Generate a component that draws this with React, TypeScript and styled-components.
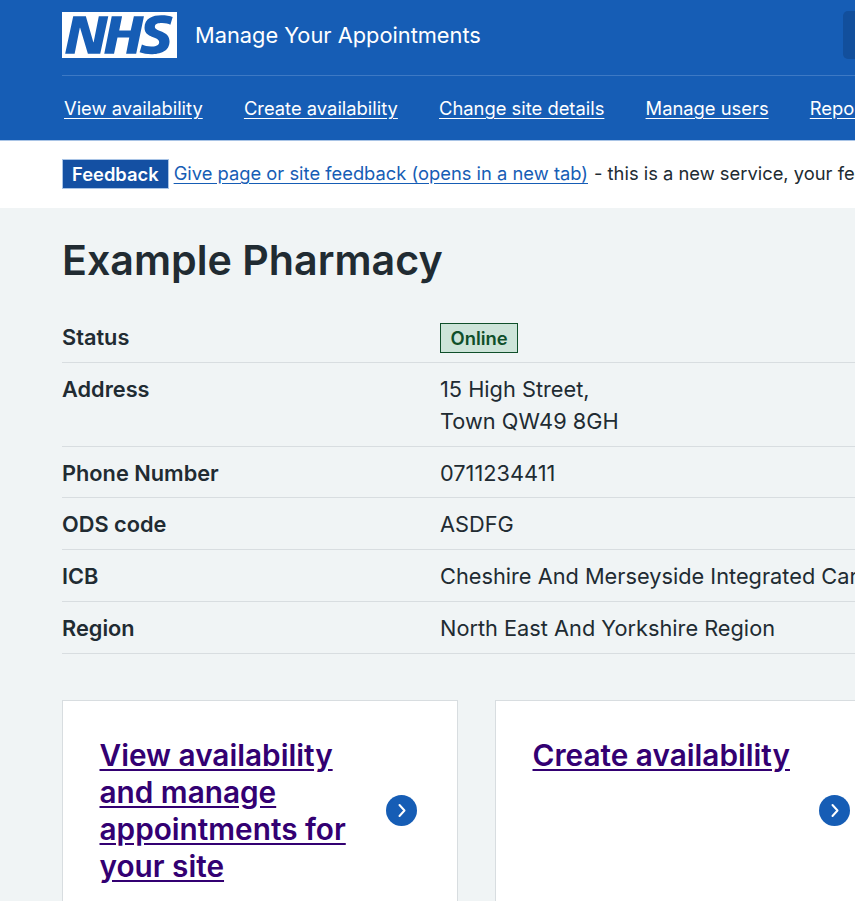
import styled, { createGlobalStyle } from "styled-components"

const Global = createGlobalStyle`
    html, body {
        margin: 0;
        height: 901px;
        overflow: hidden;
        background: #f0f4f5;
        font-family: "Inter", "Liberation Sans", sans-serif;
        color: #212b32;
    }
`

const Header = styled.header`
    background: #165db5;
    border-bottom: 1px solid #a9c4e6;
    box-sizing: border-box;
    height: 141px;
    padding: 12px 0 0 62px;
    width: 1300px;
`

const TopRow = styled.div`
    display: flex;
    align-items: flex-start;
    height: 63px;
    border-bottom: 1px solid #3d79c4;
`

const Logo = styled.svg`
    display: block;
    width: 115px;
    height: 46px;
    flex: none;
`

const ServiceName = styled.span`
    color: #fff;
    font-size: 21.8px;
    line-height: 46px;
    margin-left: 18px;
    width: 648px;
`

const HeaderButton = styled.div`
    width: 100px;
    height: 48px;
    margin-top: -1px;
    border-radius: 5px;
    background: #124f9c;
`

const Nav = styled.nav`
    display: flex;
    gap: 41.2px;
    padding: 19px 0 0 2px;
`

const NavLink = styled.a`
    color: #fff;
    font-size: 18.38px;
    line-height: 26px;
    text-decoration: underline;
    text-underline-offset: 3px;
    white-space: nowrap;
`

const FeedbackBand = styled.div`
    background: #fff;
    box-sizing: border-box;
    height: 67px;
    padding: 18px 0 0 62px;
    width: 1300px;
    display: flex;
    align-items: flex-start;
    font-size: 18.35px;
    line-height: 29px;
    white-space: nowrap;
`

const FeedbackTag = styled.strong`
    background: #1450a3;
    border: 1px solid #a9c4e6;
    box-sizing: border-box;
    color: #fff;
    font-weight: 600;
    height: 30px;
    line-height: 28px;
    padding: 0 9px;
    margin-right: 5px;
`

const FeedbackLink = styled.a`
    color: #165db5;
    text-decoration: underline;
    text-underline-offset: 3px;
    margin-right: 6px;
`

const Main = styled.main`
    padding: 25px 0 0 62px;
    width: 1300px;
`

const Title = styled.h1`
    font-size: 41.2px;
    line-height: 54px;
    font-weight: 600;
    margin: 0 0 24.4px;
`

const Summary = styled.dl`
    margin: 0 0 46px;
    width: 1100px;
`

const Row = styled.div`
    display: grid;
    grid-template-columns: 378px 1fr;
    border-bottom: 1px solid #d8dde0;
    padding: 10px 0 8.7px;
    font-size: 21.75px;
    line-height: 32px;
`

const Key = styled.dt`
    font-weight: 600;
`

const Value = styled.dd`
    margin: 0;
    white-space: nowrap;
`

const OnlineTag = styled.strong`
    display: inline-block;
    background: #cde4d9;
    border: 1px solid #0f4f2a;
    color: #0f4f2a;
    font-size: 18.4px;
    font-weight: 600;
    line-height: 28px;
    padding: 0 9.5px;
`

const Cards = styled.div`
    display: flex;
    gap: 37px;
    align-items: stretch;
`

const Card = styled.div`
    display: flex;
    align-items: center;
    gap: 20px;
    box-sizing: border-box;
    width: 396px;
    min-height: 220px;
    padding: 36px 40px 35px 36.5px;
    background: #fff;
    border: 1px solid #d8dde0;
`

const CardTitle = styled.a`
    flex: 1;
    align-self: flex-start;
    color: #330072;
    font-size: 29.75px;
    font-weight: 600;
    line-height: 37px;
    text-decoration: underline;
    text-underline-offset: 3px;
`

const Chevron = styled.svg`
    display: block;
    width: 31px;
    height: 31px;
    flex: none;
`

const CardChevron = () => (
    <Chevron viewBox="0 0 31 31">
        <circle cx="15.5" cy="15.5" r="15.5" fill="#165db5" />
        <path d="M13.5 10l5 5.5-5 5.5" fill="none" stroke="#fff" strokeWidth="2" strokeLinecap="round" strokeLinejoin="round" />
    </Chevron>
)

const rows = [
    { key: "Address", value: <>15 High Street,<br />Town QW49 8GH</> },
    { key: "Phone Number", value: "0711234411" },
    { key: "ODS code", value: "ASDFG" },
    { key: "ICB", value: "Cheshire And Merseyside Integrated Care Board" },
    { key: "Region", value: "North East And Yorkshire Region" },
]

export default function App() {
    return (
        <>
            <Global />
            <Header>
                <TopRow>
                    <Logo viewBox="0 0 40 16" role="img" aria-label="NHS">
                        <path fill="#fff" d="M0 0h40v16H0z" />
                        <path fill="#165db5" d="M3.9 1.5h4.4l2.6 9h.1l1.8-9h3.3l-2.8 13H9l-2.7-9h-.1l-1.8 9H1.1M17.3 1.5h3.6l-1 4.9h4L25 1.5h3.5l-2.7 13h-3.5l1.1-5.6h-4.1l-1.2 5.6h-3.4M37.7 4.4c-.7-.3-1.6-.6-2.9-.6-1.4 0-2.5.2-2.5 1.3 0 1.8 5.1 1.2 5.1 5.1 0 3.6-3.3 4.5-6.4 4.5-1.3 0-2.9-.3-4-.7l.8-2.7c.7.4 2.1.7 3.2.7s2.8-.2 2.8-1.5c0-2.1-5.1-1.3-5.1-5 0-3.4 2.9-4.4 5.8-4.4 1.6 0 3.1.2 4 .6" />
                    </Logo>
                    <ServiceName>Manage Your Appointments</ServiceName>
                    <HeaderButton />
                </TopRow>
                <Nav>
                    <NavLink href="#">View availability</NavLink>
                    <NavLink href="#">Create availability</NavLink>
                    <NavLink href="#">Change site details</NavLink>
                    <NavLink href="#">Manage users</NavLink>
                    <NavLink href="#">Reports</NavLink>
                </Nav>
            </Header>
            <FeedbackBand>
                <FeedbackTag>Feedback</FeedbackTag>
                <FeedbackLink href="#">Give page or site feedback (opens in a new tab)</FeedbackLink>
                <span>- this is a new service, your feedback will help us to improve it.</span>
            </FeedbackBand>
            <Main>
                <Title>Example Pharmacy</Title>
                <Summary>
                    <Row>
                        <Key>Status</Key>
                        <Value><OnlineTag>Online</OnlineTag></Value>
                    </Row>
                    {rows.map(r => (
                        <Row key={r.key}>
                            <Key>{r.key}</Key>
                            <Value>{r.value}</Value>
                        </Row>
                    ))}
                </Summary>
                <Cards>
                    <Card>
                        <CardTitle href="#">View availability and manage appointments for your site</CardTitle>
                        <CardChevron />
                    </Card>
                    <Card>
                        <CardTitle href="#">Create availability</CardTitle>
                        <CardChevron />
                    </Card>
                </Cards>
            </Main>
        </>
    )
}
